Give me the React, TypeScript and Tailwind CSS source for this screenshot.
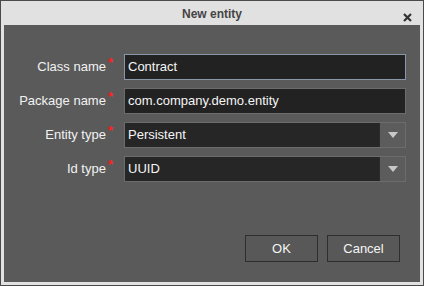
const fields = [
  { label: 'Class name', value: 'Contract', kind: 'text', focused: true },
  { label: 'Package name', value: 'com.company.demo.entity', kind: 'text' },
  { label: 'Entity type', value: 'Persistent', kind: 'select' },
  { label: 'Id type', value: 'UUID', kind: 'select' },
];

function Arrow() {
  return (
    <svg width="10" height="6" viewBox="0 0 10 6">
      <path d="M0 0 H10 L5 6 Z" fill="#c8c8c8" />
    </svg>
  );
}

export default function App() {
  return (
    <div
      className="w-[424px] h-[286px] bg-[#e1e1e1] border border-[#4a4a4a] flex flex-col"
      style={{ fontFamily: '"Liberation Sans", Arial, sans-serif' }}
    >
      <div className="h-[24px] relative flex items-center justify-center">
        <span className="text-[12px] font-bold text-[#444] mt-[1px]">New entity</span>
        <svg className="absolute right-[11px] top-[12px]" width="9" height="9" viewBox="0 0 9 9">
          <path d="M1 1 L8 8 M8 1 L1 8" stroke="#333" strokeWidth="2.2" />
        </svg>
      </div>
      <div className="flex-1 mx-[3px] mb-[3px] bg-[#5a5a5a] flex flex-col pt-[29px]">
        <div className="flex flex-col gap-[8px]">
          {fields.map((f) => (
            <div key={f.label} className="flex items-center h-[26px]">
              <div className="w-[109px] text-right text-[13px] text-[#f2f2f2] flex justify-end items-start">
                <span>{f.label}</span>
                <span className="text-[#ff2020] text-[13px] font-bold leading-none ml-[2px] -mt-[1px]">*</span>
              </div>
              <div
                className={`ml-[11px] w-[282px] h-[26px] flex items-center border ${
                  f.focused ? 'border-[#8a97ab]' : 'border-[#6c6c6c]'
                } ${f.kind === 'select' ? 'bg-[#262626]' : 'bg-[#222]'}`}
              >
                <span className="flex-1 pl-[3px] text-[13px] text-[#f5f5f5]">{f.value}</span>
                {f.kind === 'select' && (
                  <div className="w-[26px] h-[24px] bg-[#5c5c5c] border-l border-[#2a2a2a] flex items-center justify-center">
                    <Arrow />
                  </div>
                )}
              </div>
            </div>
          ))}
        </div>
        <div className="flex-1" />
        <div className="flex justify-end gap-[9px] pr-[20px] pb-[20px]">
          <button className="w-[73px] h-[27px] bg-[#585858] border border-[#2e2e2e] text-[13px] text-[#f5f5f5]">OK</button>
          <button className="w-[73px] h-[27px] bg-[#585858] border border-[#2e2e2e] text-[13px] text-[#f5f5f5]">Cancel</button>
        </div>
      </div>
    </div>
  );
}
